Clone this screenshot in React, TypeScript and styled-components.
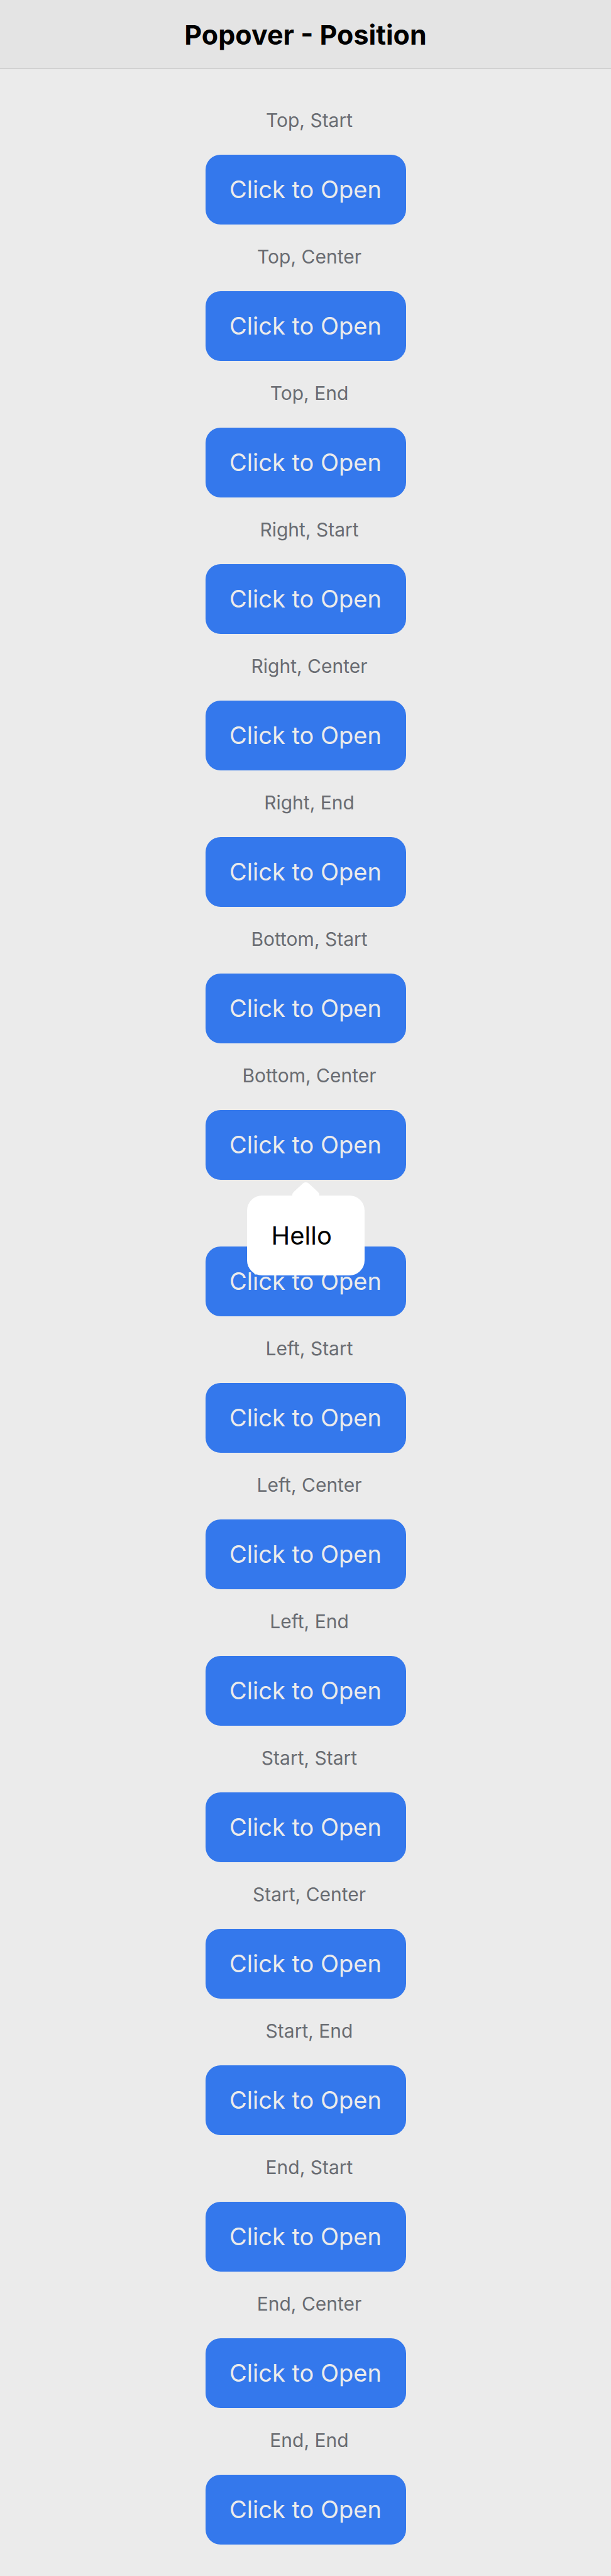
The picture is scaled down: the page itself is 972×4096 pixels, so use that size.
import React, { useState } from "react";
import styled, { createGlobalStyle } from "styled-components";

const GlobalStyle = createGlobalStyle`
  *, *::before, *::after { box-sizing: border-box; }
  body {
    margin: 0;
    background: #ebebeb;
    font-family: Inter, "Liberation Sans", sans-serif;
  }
`;

const Header = styled.header`
  display: flex;
  align-items: center;
  justify-content: center;
  height: 110px;
  background: #e4e4e4;
  border-bottom: 1px solid #b7b7b7;
`;

const Title = styled.h1`
  margin: 0;
  font-size: 43px;
  line-height: 48px;
  font-weight: 700;
  color: #000;
`;

const Content = styled.main`
  display: flex;
  flex-direction: column;
  align-items: center;
  padding: 30px 0 50px;
`;

const Item = styled.section`
  display: flex;
  flex-direction: column;
  align-items: center;
`;

const Label = styled.h2`
  display: flex;
  align-items: center;
  height: 106px;
  margin: 0;
  padding: 0 0 4px 12px;
  font-size: 30px;
  line-height: 36px;
  font-weight: 400;
  color: #696c72;
`;

const Anchor = styled.div`
  position: relative;
  display: flex;
  justify-content: center;
`;

const OpenButton = styled.button`
  width: 319px;
  height: 111px;
  padding: 0 0 2px;
  border: 0;
  border-radius: 24px;
  background: #3478ec;
  color: #ebebeb;
  font-family: inherit;
  font-size: 38px;
  line-height: 48px;
  cursor: pointer;
`;

const Popover = styled.div`
  position: absolute;
  top: 100%;
  z-index: 1;
  display: flex;
  flex-direction: column;
  align-items: center;
  padding-top: 4px;
`;

const Arrow = styled.svg`
  display: block;
  width: 43px;
  height: 21px;
  fill: #fff;
`;

const Bubble = styled.p`
  display: flex;
  align-items: center;
  width: 187px;
  height: 127px;
  margin: 0;
  padding-left: 39px;
  border-radius: 24px;
  background: #fff;
  color: #000;
  font-size: 40px;
  line-height: 48px;
`;

const positions = [
  "Top, Start",
  "Top, Center",
  "Top, End",
  "Right, Start",
  "Right, Center",
  "Right, End",
  "Bottom, Start",
  "Bottom, Center",
  "Bottom, End",
  "Left, Start",
  "Left, Center",
  "Left, End",
  "Start, Start",
  "Start, Center",
  "Start, End",
  "End, Start",
  "End, Center",
  "End, End",
];

export default function App() {
  const [open, setOpen] = useState<string | null>("Bottom, Center");

  return (
    <>
      <GlobalStyle />
      <Header>
        <Title>Popover - Position</Title>
      </Header>
      <Content>
        {positions.map((position) => (
          <Item key={position}>
            <Label>{position}</Label>
            <Anchor>
              <OpenButton
                type="button"
                aria-expanded={open === position}
                onClick={() => setOpen(open === position ? null : position)}
              >
                Click to Open
              </OpenButton>
              {open === position && (
                <Popover role="dialog" aria-label={position}>
                  <Arrow viewBox="0 0 43 21" aria-hidden="true">
                    <path d="M0 21V20Q0 17.500 2 15.500L16.500 2Q18.500 0 21.500 0T26.500 2L41 15.500Q43 17.500 43 20V21Z" />
                  </Arrow>
                  <Bubble>Hello</Bubble>
                </Popover>
              )}
            </Anchor>
          </Item>
        ))}
      </Content>
    </>
  );
}
